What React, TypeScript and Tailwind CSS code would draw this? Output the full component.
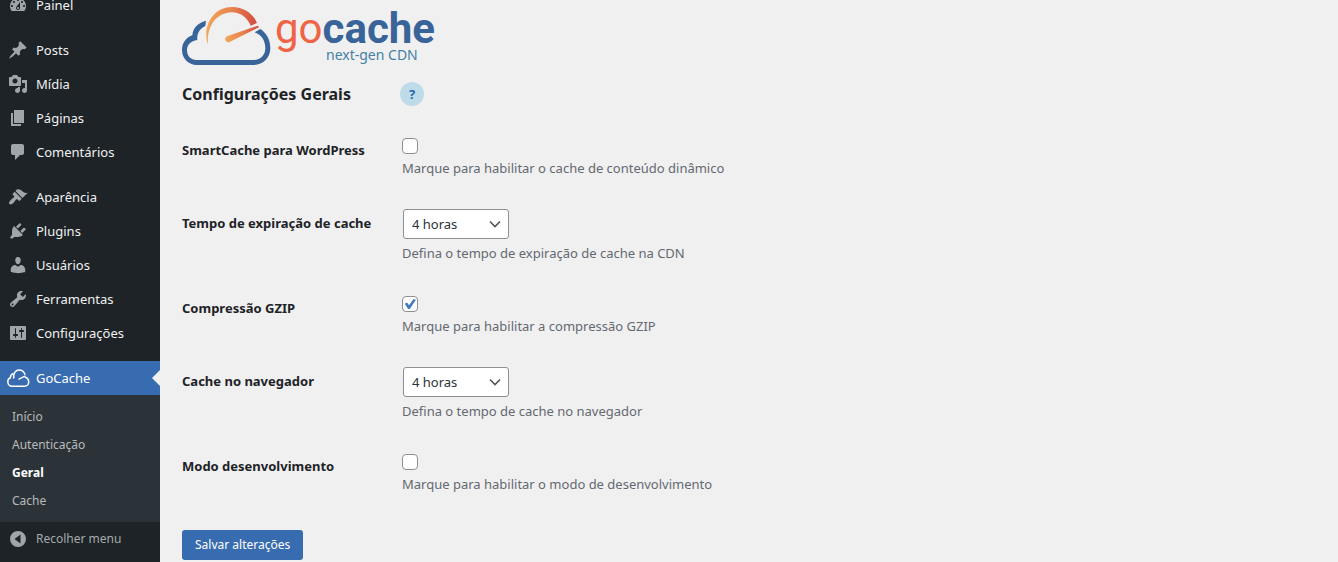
import { useId, type ReactNode } from "react";

const icons = {
  dashboard:
    "M3.76 16h12.48c1.1-1.37 1.76-3.11 1.76-5 0-4.42-3.58-8-8-8s-8 3.58-8 8c0 1.89.66 3.63 1.76 5zM10 4c.55 0 1 .45 1 1s-.45 1-1 1-1-.45-1-1 .45-1 1-1zM6 6c.55 0 1 .45 1 1s-.45 1-1 1-1-.45-1-1 .45-1 1-1zm8 0c.55 0 1 .45 1 1s-.45 1-1 1-1-.45-1-1 .45-1 1-1zm-5.37 5.55L12 7v6c0 1.1-.9 2-2 2s-2-.9-2-2c0-.57.24-1.08.63-1.45zM4 10c.55 0 1 .45 1 1s-.45 1-1 1-1-.45-1-1 .45-1 1-1zm12 0c.55 0 1 .45 1 1s-.45 1-1 1-1-.45-1-1 .45-1 1-1zm-5 3c0-.55-.45-1-1-1s-1 .45-1 1 .45 1 1 1 1-.45 1-1z",
  post: "M10.44 3.02l1.82-1.82 6.36 6.35-1.83 1.82c-1.05-.68-2.48-.57-3.41.36l-.75.75c-.92.93-1.04 2.35-.35 3.41l-1.83 1.82-2.41-2.41-2.8 2.79c-.42.42-3.38 2.71-3.8 2.29s1.86-3.39 2.28-3.81l2.79-2.79L4.1 9.36l1.83-1.82c1.05.69 2.48.57 3.4-.36l.75-.75c.93-.92 1.05-2.35.36-3.41z",
  media:
    "M13 11V4c0-.55-.45-1-1-1h-1.67L9 1H5L3.67 3H2c-.55 0-1 .45-1 1v7c0 .55.45 1 1 1h10c.55 0 1-.45 1-1zM7 4.5c1.38 0 2.5 1.12 2.5 2.5S8.38 9.5 7 9.5 4.5 8.38 4.5 7 5.62 4.5 7 4.5zM14 6h5v10.5c0 1.38-1.12 2.5-2.5 2.5S14 17.88 14 16.5s1.12-2.5 2.5-2.5c.17 0 .34.02.5.05V9h-3V6zm-4 8.05V13h2v3.5c0 1.38-1.12 2.5-2.5 2.5S7 17.88 7 16.5 8.12 14 9.5 14c.17 0 .34.02.5.05z",
  page: "M6 15V2h10v13H6zm-1 1h8v2H3V5h2v11z",
  comments: "M5 2h9c1.1 0 2 .9 2 2v7c0 1.1-.9 2-2 2h-2l-5 5v-5H5c-1.1 0-2-.9-2-2V4c0-1.1.9-2 2-2z",
  appearance:
    "M14.48 11.06L7.41 3.99l1.5-1.5c.5-.56 2.3-.47 3.51.32 1.21.8 1.43 1.28 2.91 2.1 1.18.64 2.45 1.26 4.45.85zm-.71.71L6.7 4.7 4.93 6.47c-.39.39-.39 1.02 0 1.41l1.06 1.06c.39.39.39 1.03 0 1.42-.6.6-1.43 1.11-2.21 1.69-.35.26-.7.53-1.01.84C1.43 14.23.4 16.08 1.4 17.07c.99 1 2.84-.03 4.18-1.36.31-.31.58-.66.85-1.02.57-.78 1.08-1.61 1.69-2.21.39-.39 1.02-.39 1.41 0l1.06 1.06c.39.39 1.02.39 1.41 0z",
  plugins:
    "M13.11 4.36L9.87 7.6 8 5.73l3.24-3.24c.35-.34 1.05-.2 1.56.32.52.51.66 1.21.31 1.55zm-8 1.77l.91-1.12 9.01 9.01-1.19.84c-.71.71-2.63 1.16-3.82 1.16H6.14L4.9 17.26c-.59.59-1.54.59-2.12 0-.59-.58-.59-1.53 0-2.12l1.24-1.24v-3.88c0-1.13.4-3.19 1.09-3.89zm7.26 3.97l3.24-3.24c.34-.35 1.04-.21 1.55.31.52.51.66 1.21.31 1.55l-3.24 3.25z",
  users:
    "M10 9.25c-2.27 0-2.73-3.44-2.73-3.44C7 4.02 7.82 2 9.97 2c2.16 0 2.98 2.02 2.71 3.81 0 0-.41 3.44-2.68 3.44zM10 11.82L12.72 10c2.39 0 4.52 2.33 4.52 4.53v2.49s-3.65 1.13-7.24 1.13c-3.65 0-7.24-1.13-7.24-1.13v-2.49c0-2.25 1.94-4.48 4.47-4.48z",
  tools:
    "M16.68 9.77c-1.34 1.34-3.3 1.67-4.95.99l-5.41 6.52c-.99.99-2.59.99-3.58 0s-.99-2.59 0-3.57l6.52-5.42c-.68-1.65-.35-3.61.99-4.95 1.28-1.28 3.12-1.62 4.72-1.06l-2.89 2.89 2.82 2.82 2.86-2.87c.53 1.58.18 3.39-1.08 4.65zM3.81 16.21c.4.39 1.04.39 1.43 0 .4-.4.4-1.04 0-1.43-.39-.4-1.03-.4-1.43 0-.39.39-.39 1.03 0 1.43z",
  settings:
    "M18 16V4c0-.55-.45-1-1-1H3c-.55 0-1 .45-1 1v12c0 .55.45 1 1 1h14c.55 0 1-.45 1-1zM8 11h1c.55 0 1 .45 1 1s-.45 1-1 1H8v1.5c0 .28-.22.5-.5.5s-.5-.22-.5-.5V13H6c-.55 0-1-.45-1-1s.45-1 1-1h1V5.5c0-.28.22-.5.5-.5s.5.22.5.5V11zm5-2h-1c-.55 0-1-.45-1-1s.45-1 1-1h1V5.5c0-.28.22-.5.5-.5s.5.22.5.5V7h1c.55 0 1 .45 1 1s-.45 1-1 1h-1v5.5c0 .28-.22.5-.5.5s-.5-.22-.5-.5V9z",
  collapse: "M10 2a8 8 0 1 0 0 16a8 8 0 1 0 0-16zM12.5 5.5v9L6.5 10z",
};

type IconName = keyof typeof icons;

const menu: { label: string; icon: IconName }[][] = [
  [{ label: "Painel", icon: "dashboard" }],
  [
    { label: "Posts", icon: "post" },
    { label: "Mídia", icon: "media" },
    { label: "Páginas", icon: "page" },
    { label: "Comentários", icon: "comments" },
  ],
  [
    { label: "Aparência", icon: "appearance" },
    { label: "Plugins", icon: "plugins" },
    { label: "Usuários", icon: "users" },
    { label: "Ferramentas", icon: "tools" },
    { label: "Configurações", icon: "settings" },
  ],
];

const submenu = ["Início", "Autenticação", "Geral", "Cache"];

function Icon({ name }: { name: IconName }) {
  return (
    <span className="flex w-9 shrink-0 justify-center text-[#a0a5aa]">
      <svg
        viewBox="0 0 20 20"
        className="size-5"
        fill="currentColor"
        fillRule={name === "users" ? "nonzero" : "evenodd"}
        aria-hidden="true"
      >
        <path d={icons[name]} />
      </svg>
    </span>
  );
}

function CloudIcon() {
  return (
    <span className="flex w-9 shrink-0 justify-center">
      <svg
        viewBox="0 0 24 20"
        className="h-5 w-6"
        fill="none"
        stroke="currentColor"
        strokeWidth="1.5"
        strokeLinecap="round"
        aria-hidden="true"
      >
        <path d="M7 5.6C5.3 6.3 4.4 7.8 4.4 9.7C2.7 10.4 1.8 11.8 1.8 13.5C1.8 16.2 3.7 18.2 6.2 18.2H18.5C21 18.2 22.7 16.3 22.7 13.9C22.7 11.7 21.3 10 19.3 9.3" />
        <path d="M7.7 10C7.3 5 9.6 2 13.2 2C15.9 2 17.9 3.5 18.9 6.2" />
        <path d="M13 11.2L18.9 8.2" strokeWidth="1.3" />
      </svg>
    </span>
  );
}

function Logo() {
  return (
    <svg viewBox="0 0 256 64" className="h-16 w-64" role="img" aria-label="gocache next-gen CDN">
      <defs>
        <linearGradient id="gauge" x1="0" y1="0" x2="1" y2="0">
          <stop offset="0" stopColor="#f2a65a" />
          <stop offset="0.5" stopColor="#e8834c" />
          <stop offset="1" stopColor="#d24a43" />
        </linearGradient>
      </defs>
      <g transform="translate(-2 0) scale(0.33333)">
        <path
          fill="#386499"
          d="M78 50C53 56 38 74 37 94C17 101 6 118 6 138C6 164 26 183 50 183H222C250 183 271 161 271 133C271 106 259 87 241 75L224 85C245 93 256 110 256 133C256 153 242 168 222 168H50C32 168 21 155 21 138C21 123 32 110 52 108C50 88 60 73 76 66Z"
        />
        <path
          fill="url(#gauge)"
          d="M82 118C67 58 105 9 156 9C191 9 219 28 231 57L212 65C201 39 181 26 155 25C109 26 80 68 84 118Z"
        />
        <path fill="url(#gauge)" d="M145 95L234 65L237 70L153 112A10 10 0 1 1 145 95Z" />
      </g>
      <text x="93" y="39" fontSize="42" fontFamily="Roboto, sans-serif" fill="#ee6444">
        go
        <tspan fontWeight="700" fill="#386499">
          cache
        </tspan>
      </text>
      <text x="144" y="56" fontSize="14" fontFamily="Noto Sans, sans-serif" fill="#4480a5">
        next-gen CDN
      </text>
    </svg>
  );
}

function Row({ label, id, children }: { label: string; id: string; children: ReactNode }) {
  return (
    <div className="flex pt-[15px] pb-4">
      <div className="w-[220px] shrink-0 pt-1">
        <label htmlFor={id} className="font-bold text-[#1d2327]">
          {label}
        </label>
      </div>
      <div className="min-w-0 flex-1">{children}</div>
    </div>
  );
}

function CheckRow({ label, note, checked = false }: { label: string; note: string; checked?: boolean }) {
  const id = useId();
  return (
    <Row label={label} id={id}>
      <div className="flex h-5 items-center">
        <span className="grid">
          <input
            id={id}
            type="checkbox"
            defaultChecked={checked}
            className="peer col-start-1 row-start-1 size-4 appearance-none rounded border border-[#8c8f94] bg-white"
          />
          <svg
            viewBox="0 0 16 16"
            className="pointer-events-none invisible col-start-1 row-start-1 size-4 peer-checked:visible"
            fill="#3f7ac4"
            aria-hidden="true"
          >
            <path d="M2.8 7.8L5 6.6L7 9.2L11.6 3L13.9 3.8L7.8 13H6.1Z" />
          </svg>
        </span>
      </div>
      <p className="mt-0.5">{note}</p>
    </Row>
  );
}

function SelectRow({ label, note }: { label: string; note: string }) {
  const id = useId();
  return (
    <Row label={label} id={id}>
      <div className="grid w-[107px] pl-px">
        <select
          id={id}
          defaultValue="4"
          className="col-start-1 row-start-1 h-[30px] appearance-none rounded-[3px] border border-[#8c8f94] bg-white pr-6 pl-2 text-[#2c3338]"
        >
          <option value="1">1 hora</option>
          <option value="4">4 horas</option>
          <option value="8">8 horas</option>
        </select>
        <svg
          viewBox="0 0 16 16"
          className="pointer-events-none col-start-1 row-start-1 mr-1.5 size-4 self-center justify-self-end"
          fill="none"
          stroke="#50575e"
          strokeWidth="1.6"
          aria-hidden="true"
        >
          <path d="M3 5.5L8 10.5L13 5.5" />
        </svg>
      </div>
      <p className="mt-1">{note}</p>
    </Row>
  );
}

export default function App() {
  return (
    <div className="flex min-h-screen overflow-hidden bg-[#f0f0f0] font-['Noto_Sans',sans-serif] text-[13px] leading-5 text-[#646970]">
      <aside className="w-40 shrink-0 bg-[#1d2327] text-[#f0f0f1]">
        <nav className="-mt-3" aria-label="Menu principal">
          {menu.map((group, i) => (
            <ul key={i} className="mb-[11px]">
              {group.map((item) => (
                <li key={item.label}>
                  <a href="#" className="flex h-[34px] items-center">
                    <Icon name={item.icon} />
                    {item.label}
                  </a>
                </li>
              ))}
            </ul>
          ))}
          <a href="#" className="relative flex h-[34px] items-center bg-[#386cb0] text-white">
            <CloudIcon />
            GoCache
            <span className="absolute top-[9px] right-0 border-y-8 border-r-8 border-y-transparent border-r-[#f0f0f0]" />
          </a>
          <ul className="bg-[#2c3338] pt-2 pb-[7px] text-xs">
            {submenu.map((label) => (
              <li key={label}>
                <a
                  href="#"
                  className={
                    label === "Geral"
                      ? "flex h-7 items-center px-3 font-bold text-white"
                      : "flex h-7 items-center px-3 text-[#b8babc]"
                  }
                >
                  {label}
                </a>
              </li>
            ))}
          </ul>
          <button type="button" className="flex h-[34px] w-full items-center text-xs text-[#a7aaad]">
            <Icon name="collapse" />
            Recolher menu
          </button>
        </nav>
      </aside>

      <main className="min-w-0 flex-1 pt-1 pl-[22px]">
        <Logo />
        <div className="flex items-center pt-3.5">
          <h2 className="w-[218px] text-base font-bold leading-6 text-[#1d2327]">Configurações Gerais</h2>
          <button
            type="button"
            aria-label="Ajuda"
            className="size-6 rounded-full bg-[#bedbe9] text-[13px] font-bold text-[#2a66ae]"
          >
            ?
          </button>
        </div>
        <form className="pt-[15px]" onSubmit={(e) => e.preventDefault()}>
          <CheckRow
            label="SmartCache para WordPress"
            note="Marque para habilitar o cache de conteúdo dinâmico"
          />
          <SelectRow label="Tempo de expiração de cache" note="Defina o tempo de expiração de cache na CDN" />
          <CheckRow label="Compressão GZIP" note="Marque para habilitar a compressão GZIP" checked />
          <SelectRow label="Cache no navegador" note="Defina o tempo de cache no navegador" />
          <CheckRow label="Modo desenvolvimento" note="Marque para habilitar o modo de desenvolvimento" />
          <button type="submit" className="mt-5 h-[30px] rounded-[3px] bg-[#386cb0] px-[13px] text-xs text-white">
            Salvar alterações
          </button>
        </form>
      </main>
    </div>
  );
}
